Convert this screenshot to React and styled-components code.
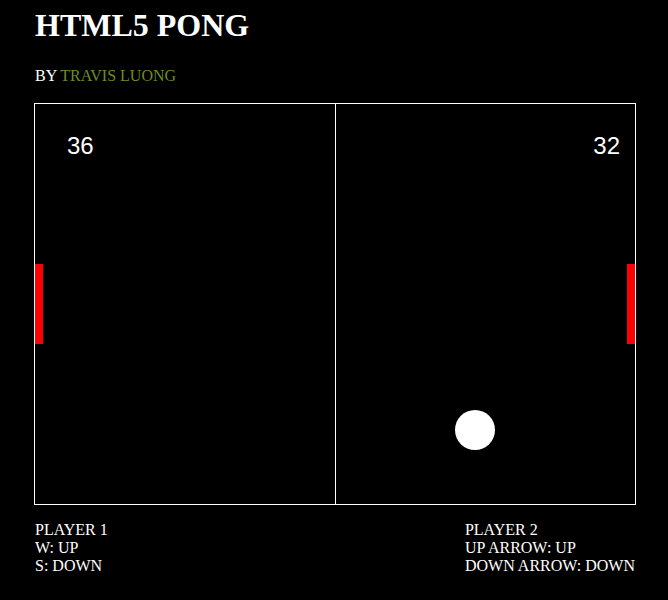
import React from 'react'
import styled, { createGlobalStyle } from 'styled-components'

const GlobalStyle = createGlobalStyle`
  html, body {
    margin: 0;
    padding: 0;
    background: #000000;
  }
  body {
    font-family: "Liberation Serif", "Times New Roman", serif;
    color: #FFFFFF;
  }
`;

export default function App() {
  const game = {
    scoreLeft: 36,
    scoreRight: 32,
    leftPaddle: 160,
    rightPaddle: 160,
    ball: { x: 440, y: 326 },
  };

  return (
    <Page>
      <GlobalStyle />
      <Title>HTML5 PONG</Title>
      <Byline>BY <Author href="#">TRAVIS LUONG</Author></Byline>
      <Board>
        <Score side="left">{game.scoreLeft}</Score>
        <Score side="right">{game.scoreRight}</Score>
        <Paddle side="left" style={{ top: game.leftPaddle }} />
        <Paddle side="right" style={{ top: game.rightPaddle }} />
        <Ball style={{ left: game.ball.x - 20, top: game.ball.y - 20 }} />
      </Board>
      <Controls>
        <PlayerInfo>
          PLAYER 1<br />
          W: UP<br />
          S: DOWN
        </PlayerInfo>
        <PlayerInfo>
          PLAYER 2<br />
          UP ARROW: UP<br />
          DOWN ARROW: DOWN
        </PlayerInfo>
      </Controls>
    </Page>
  )
}

const Page = styled.div`
  width: 602px;
  padding: 7px 0 0 34px;
`;

const Title = styled.h1`
  margin: 0 0 0 1px;
  font-size: 32px;
  font-weight: bold;
  line-height: 37px;
`;

const Byline = styled.p`
  margin: 23px 0 0 1px;
  font-size: 16px;
  line-height: 18px;
`;

const Author = styled.a`
  color: #6B8E23;
  text-decoration: none;
`;

const Board = styled.div`
  position: relative;
  margin-top: 18px;
  width: 600px;
  height: 400px;
  border: 1px solid #FFFFFF;
  overflow: hidden;

  &::before {
    content: '';
    position: absolute;
    left: 300px;
    top: 0;
    width: 1px;
    height: 100%;
    background: #FFFFFF;
  }
`;

const Score = styled.div`
  position: absolute;
  top: 28px;
  ${p => p.side === 'left' ? 'left: 32px;' : 'right: 15px;'}
  font-family: "Liberation Sans", Arial, sans-serif;
  font-size: 24px;
  line-height: 28px;
  color: #FFFFFF;
`;

const Paddle = styled.div`
  position: absolute;
  ${p => p.side === 'left' ? 'left: 0;' : 'right: 0;'}
  width: 8px;
  height: 80px;
  background: #FF0000;
`;

const Ball = styled.div`
  position: absolute;
  width: 40px;
  height: 40px;
  border-radius: 50%;
  background: #FFFFFF;
`;

const Controls = styled.div`
  display: flex;
  justify-content: space-between;
  margin-top: 16px;
  padding: 0 1px;
`;

const PlayerInfo = styled.div`
  font-size: 16px;
  line-height: 18px;
`;
